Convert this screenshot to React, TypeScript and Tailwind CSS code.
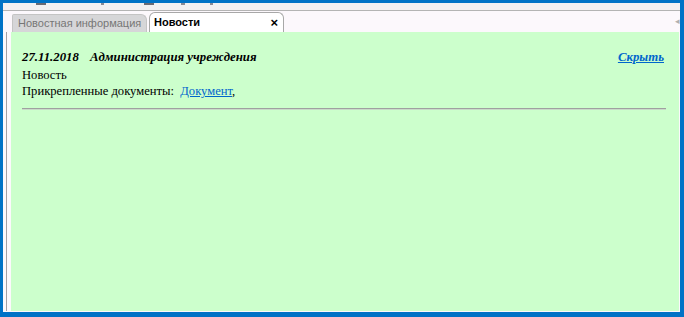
const serif = { fontFamily: '"Liberation Serif", "Times New Roman", serif' };

export default function App() {
  return (
    <div className="w-[684px] h-[317px] bg-[#0072c6] pt-[3px] pl-[3px] pr-[4px] pb-[5px]">
      <div className="flex h-full flex-col bg-[#fcf8fc]">
        {/* cut-off strip of the window above */}
        <div className="relative h-[7px] bg-[#f2f0f2]">
          <span className="absolute left-[33px] top-0 h-[2px] w-[10px] bg-[#6a6a74]" />
          <span className="absolute left-[98px] top-0 h-[2px] w-[3px] bg-[#8a8a94]" />
          <span className="absolute left-[141px] top-0 h-[2px] w-[10px] bg-[#6a6a74]" />
          <span className="absolute left-[178px] top-0 h-[2px] w-[4px] bg-[#8a8a94]" />
          <span className="absolute left-[207px] top-0 h-[2px] w-[3px] bg-[#8a8a94]" />
        </div>
        <div className="h-px bg-[#b4b4b4]" />

        {/* tabs */}
        <div className="relative flex h-[21px] items-end pl-[9px] font-['Liberation_Sans',Arial,sans-serif] text-[11px]">
          <div className="flex h-[18px] w-[135px] items-center rounded-tr-[6px] rounded-tl-[2px] border border-b-0 border-[#c4c4c4] bg-[#d6d6d8] pl-[5px] text-[#767676]">
            Новостная информация
          </div>
          <div className="ml-[2px] flex h-[20px] w-[135px] items-center justify-between rounded-t-[6px] border border-b-0 border-[#a8a8a8] bg-white pl-[4px] pr-[5px] font-bold text-black">
            <span>Новости</span>
            <span className="text-[13px] leading-none">×</span>
          </div>
          <span className="absolute right-0 top-[6px] text-[9px] leading-none text-[#b0b0b0]">◂</span>
        </div>

        {/* body */}
        <div className="flex flex-1 pb-px pr-px">
          <div className="w-[8px] pl-[3px]">
            <div className="h-full w-px bg-[#a4a0a4]" />
          </div>
          <div className="flex-1 bg-[#ccffcc] pl-[11px] pr-[13px] pt-[17px] text-[12.6px] leading-[16px] text-black" style={serif}>
            <div className="flex items-baseline text-[12.8px]">
              <span className="font-bold italic">27.11.2018</span>
              <span className="ml-[11px] font-bold italic">Администрация учреждения</span>
              <a className="ml-auto mr-[2px] font-bold italic text-[#0066cc] underline">Скрыть</a>
            </div>
            <div className="mt-[2px]">Новость</div>
            <div>
              Прикрепленные документы:&nbsp;&nbsp;<a className="text-[#0066cc] underline">Документ</a>,
            </div>
            <div className="mt-[9px] h-[2px] border-t border-[#a0a0a0] bg-[#c8dcc8]" />
          </div>
        </div>
      </div>
    </div>
  );
}
